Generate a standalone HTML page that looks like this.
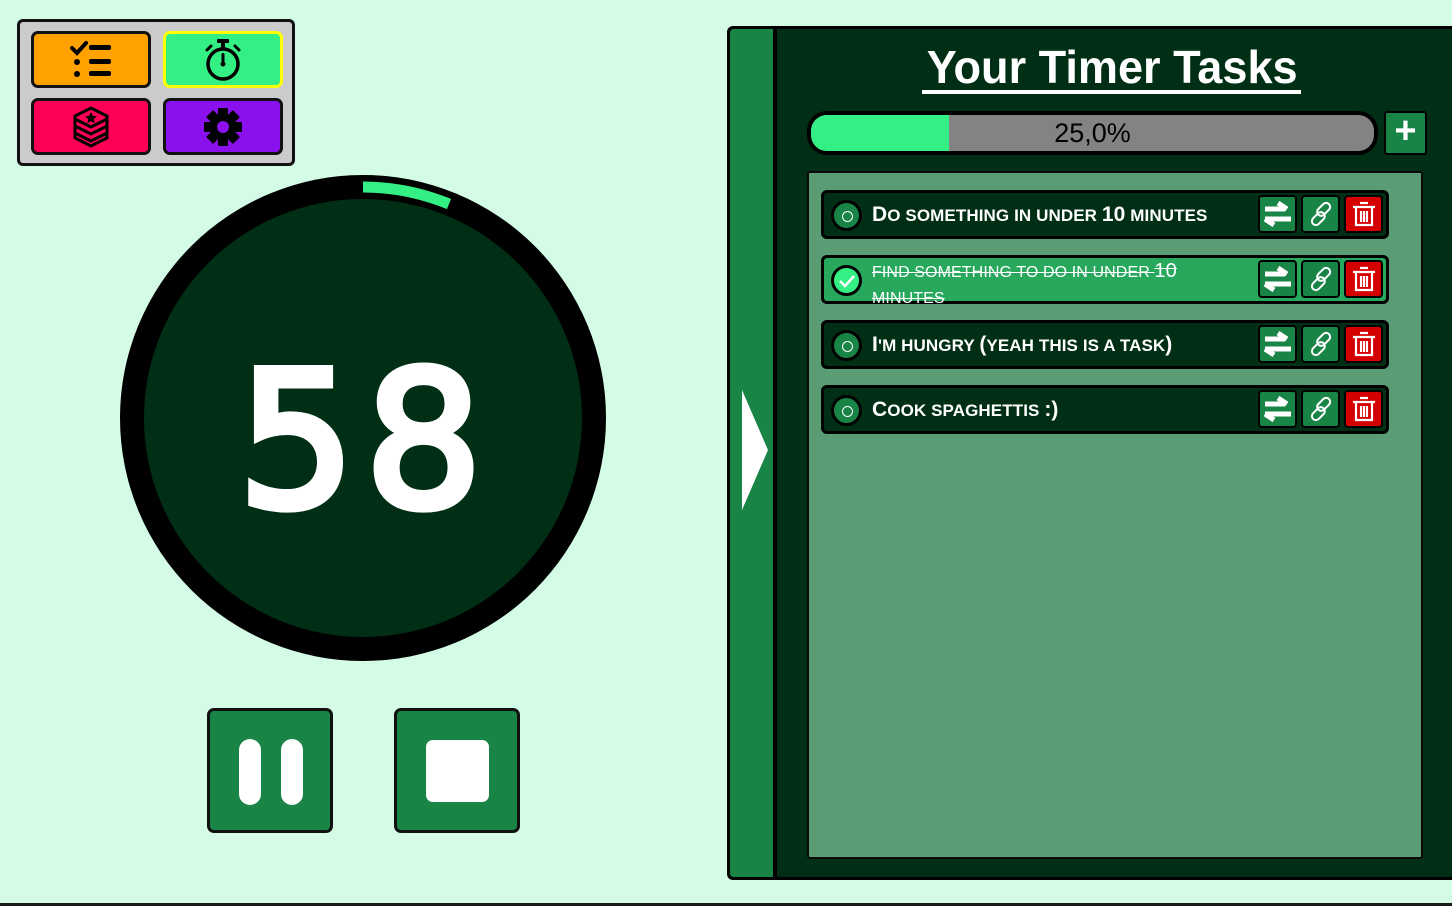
<!DOCTYPE html>
<html><head><meta charset="utf-8"><style>
*{box-sizing:border-box;margin:0;padding:0}
body{width:1452px;height:906px;background:#d4fbe6;position:relative;overflow:hidden;font-family:"Liberation Sans",sans-serif}
.abs{position:absolute}
.menu{left:17px;top:19px;width:278px;height:147px;background:#cbcbcb;border:3px solid #111;border-radius:6px}
.mb{position:absolute;width:120px;height:57px;border:3px solid #111;border-radius:7px;display:flex;align-items:center;justify-content:center}
.panel{left:727px;top:26px;width:740px;height:854px;background:#002f15;border:3px solid #000;border-radius:6px}
.strip{left:730px;top:29px;width:47px;height:848px;background:#188446;border-right:4px solid #000;border-radius:4px 0 0 4px}
.list{left:807px;top:171px;width:616px;height:688px;background:#5a9c74;border:2px solid #0a0a0a;border-radius:3px}
.row{position:absolute;left:821px;width:568px;height:49px;background:#002f15;border:3px solid #000;border-radius:6px}
.row .c{position:absolute;left:7px;top:7px;width:31px;height:31px;border-radius:50%;background:#188446;border:3px solid #000}
.row .c.o::after{content:"";position:absolute;left:8px;top:8px;width:9px;height:9px;border:1.5px solid #fff;border-radius:50%}
.row .t{position:absolute;left:48px;top:10px;color:#fff;font-weight:bold;font-size:17px;text-transform:uppercase;white-space:nowrap;letter-spacing:0.1px}
.row .t b{font-size:21px}
.ib{position:absolute;top:2px;width:39px;height:38px;border:2px solid #000;border-radius:4px;background:#188446;display:flex;align-items:center;justify-content:center}
.btn{position:absolute;width:126px;height:125px;background:#188446;border:3px solid #111;border-radius:7px}
</style></head><body>
<div class="abs menu">
 <div class="mb" style="left:11px;top:9px;background:#ffa200">
  <svg width="44" height="40" viewBox="0 0 44 40"><path d="M3 8l5 5 9-10" stroke="#000" stroke-width="4" fill="none" stroke-linecap="round"/><rect x="20" y="5" width="22" height="5" rx="2"/><circle cx="8" cy="22" r="3"/><rect x="20" y="19" width="22" height="5" rx="2"/><circle cx="8" cy="34" r="3"/><rect x="20" y="31" width="22" height="5" rx="2"/></svg>
 </div>
 <div class="mb" style="left:143px;top:9px;background:#34ef84;border-color:#ffff00">
  <svg width="40" height="44" viewBox="0 0 40 44"><rect x="14" y="1" width="12" height="4" rx="1"/><rect x="18" y="4" width="4" height="6"/><circle cx="20" cy="26" r="15" fill="none" stroke="#000" stroke-width="3.5"/><rect x="18.5" y="15" width="3" height="11" rx="1.5"/><circle cx="20" cy="26" r="2.5"/><path d="M4 12l4-4M36 12l-4-4" stroke="#000" stroke-width="3" stroke-linecap="round"/></svg>
 </div>
 <div class="mb" style="left:11px;top:76px;background:#ff0058">
  <svg width="36" height="42" viewBox="0 0 36 42"><path d="M18 2L34 10V32L18 40L2 32V10Z" fill="none" stroke="#000" stroke-width="3"/><path d="M2 20L18 28L34 20M2 27L18 35L34 27M2 13L18 21L34 13" fill="none" stroke="#000" stroke-width="3"/><path d="M18 6l1.8 3.8 4 .5-3 2.8.8 4-3.6-2-3.6 2 .8-4-3-2.8 4-.5z"/></svg>
 </div>
 <div class="mb" style="left:143px;top:76px;background:#8a10ee">
  <svg width="40" height="40" viewBox="0 0 40 40"><g transform="translate(20 20)"><g id="g"><rect x="-5" y="-19" width="10" height="10" rx="1"/></g><use href="#g" transform="rotate(45)"/><use href="#g" transform="rotate(90)"/><use href="#g" transform="rotate(135)"/><use href="#g" transform="rotate(180)"/><use href="#g" transform="rotate(225)"/><use href="#g" transform="rotate(270)"/><use href="#g" transform="rotate(315)"/><circle r="13"/><circle r="6" fill="#8a10ee"/></g></svg>
 </div>
</div>

<svg class="abs" style="left:110px;top:165px" width="510" height="510" viewBox="0 0 510 510">
 <circle cx="253" cy="253" r="243" fill="#000"/>
 <circle cx="253" cy="253" r="219" fill="#002f15"/>
 <path d="M253 22 A231 231 0 0 1 339 39" stroke="#34ef84" stroke-width="11" fill="none"/>
</svg>
<div class="abs" style="left:210px;top:348px;width:310px;text-align:center;color:#fff;font-size:188px;line-height:188px;font-family:'DejaVu Sans','Liberation Sans',sans-serif;letter-spacing:10px;-webkit-text-stroke:8px #fff;transform:scaleX(0.98)">58</div>

<div class="btn" style="left:207px;top:708px"><div class="abs" style="left:29px;top:28px;width:22px;height:66px;background:#fff;border-radius:11px"></div><div class="abs" style="left:71px;top:28px;width:22px;height:66px;background:#fff;border-radius:11px"></div></div>
<div class="btn" style="left:394px;top:708px"><div class="abs" style="left:29px;top:29px;width:63px;height:62px;background:#fff;border-radius:7px"></div></div>

<div class="abs panel"></div>
<div class="abs strip"></div>
<svg class="abs" style="left:740px;top:390px" width="30" height="122"><path d="M2 0L28 60L2 120Z" fill="#fff"/></svg>
<div class="abs" style="left:902px;top:38px;width:420px;text-align:center;color:#fff;font-weight:bold;font-size:46px;line-height:58px;white-space:nowrap"><span style="display:inline-block;transform:scaleX(0.98)">Your Timer Tasks</span></div>
<div class="abs" style="left:922px;top:90px;width:379px;height:4px;background:#fff"></div>

<div class="abs" style="left:807px;top:111px;width:571px;height:44px;border:4px solid #000;border-radius:20px;background:#838383;overflow:hidden">
 <div style="position:absolute;left:0;top:0;width:138px;height:100%;background:#34ef84"></div>
 <div style="position:absolute;left:0;top:0;width:100%;text-align:center;font-size:27px;line-height:36px;color:#000">25,0%</div>
</div>
<div class="abs" style="left:1384px;top:111px;width:43px;height:44px;background:#188446;border:2px solid #000;border-radius:3px;color:#fff;font-size:38px;line-height:36px;text-align:center;font-weight:bold">+</div>

<div class="abs list"></div>

<div class="row" style="top:190px"><div class="c o"></div><div class="t"><b>D</b>o something in under <b>10</b> minutes</div>
 <div class="ib" style="left:434px"><svg width="30" height="26"><path d="M2 8h20M15 2l9 6M2 18h26M2 18l9 6" stroke="#fff" stroke-width="5" fill="none"/></svg></div>
 <div class="ib" style="left:477px"><svg width="26" height="26" viewBox="0 0 26 26"><g fill="none" stroke="#fff" stroke-width="2"><rect x="12" y="1" width="8" height="15" rx="4" transform="rotate(45 16 8)"/><rect x="6" y="10" width="8" height="15" rx="4" transform="rotate(45 10 18)"/></g></svg></div>
 <div class="ib" style="left:520px;background:#d40000"><svg width="26" height="28"><path d="M9 3h8M2 7h22M5 7v18h16V7M10 11v11M13 11v11M16 11v11" stroke="#fff" stroke-width="2.2" fill="none"/></svg></div>
</div>
<div class="row" style="top:255px;background:#27a85d"><div class="c" style="background:#34ef84"><svg width="25" height="25" style="position:absolute;left:0;top:0"><path d="M6 13l5 5 9-10" stroke="#fff" stroke-width="2.5" fill="none"/></svg></div><div class="t" style="top:0px;font-weight:normal;line-height:26px;text-decoration:line-through;font-size:16px">Find something to do in under <span style="font-size:20px">10</span><br>minutes</div>
 <div class="ib" style="left:434px"><svg width="30" height="26"><path d="M2 8h20M15 2l9 6M2 18h26M2 18l9 6" stroke="#fff" stroke-width="5" fill="none"/></svg></div>
 <div class="ib" style="left:477px"><svg width="26" height="26" viewBox="0 0 26 26"><g fill="none" stroke="#fff" stroke-width="2"><rect x="12" y="1" width="8" height="15" rx="4" transform="rotate(45 16 8)"/><rect x="6" y="10" width="8" height="15" rx="4" transform="rotate(45 10 18)"/></g></svg></div>
 <div class="ib" style="left:520px;background:#d40000"><svg width="26" height="28"><path d="M9 3h8M2 7h22M5 7v18h16V7M10 11v11M13 11v11M16 11v11" stroke="#fff" stroke-width="2.2" fill="none"/></svg></div>
</div>
<div class="row" style="top:320px"><div class="c o"></div><div class="t"><b>I</b>'m hungry <b>(</b>yeah this is a task<b>)</b></div>
 <div class="ib" style="left:434px"><svg width="30" height="26"><path d="M2 8h20M15 2l9 6M2 18h26M2 18l9 6" stroke="#fff" stroke-width="5" fill="none"/></svg></div>
 <div class="ib" style="left:477px"><svg width="26" height="26" viewBox="0 0 26 26"><g fill="none" stroke="#fff" stroke-width="2"><rect x="12" y="1" width="8" height="15" rx="4" transform="rotate(45 16 8)"/><rect x="6" y="10" width="8" height="15" rx="4" transform="rotate(45 10 18)"/></g></svg></div>
 <div class="ib" style="left:520px;background:#d40000"><svg width="26" height="28"><path d="M9 3h8M2 7h22M5 7v18h16V7M10 11v11M13 11v11M16 11v11" stroke="#fff" stroke-width="2.2" fill="none"/></svg></div>
</div>
<div class="row" style="top:385px"><div class="c o"></div><div class="t"><b>C</b>ook spaghettis <b>:)</b></div>
 <div class="ib" style="left:434px"><svg width="30" height="26"><path d="M2 8h20M15 2l9 6M2 18h26M2 18l9 6" stroke="#fff" stroke-width="5" fill="none"/></svg></div>
 <div class="ib" style="left:477px"><svg width="26" height="26" viewBox="0 0 26 26"><g fill="none" stroke="#fff" stroke-width="2"><rect x="12" y="1" width="8" height="15" rx="4" transform="rotate(45 16 8)"/><rect x="6" y="10" width="8" height="15" rx="4" transform="rotate(45 10 18)"/></g></svg></div>
 <div class="ib" style="left:520px;background:#d40000"><svg width="26" height="28"><path d="M9 3h8M2 7h22M5 7v18h16V7M10 11v11M13 11v11M16 11v11" stroke="#fff" stroke-width="2.2" fill="none"/></svg></div>
</div>
<div class="abs" style="left:0;top:903px;width:1452px;height:3px;background:#1a1a1a"></div>
</body></html>
